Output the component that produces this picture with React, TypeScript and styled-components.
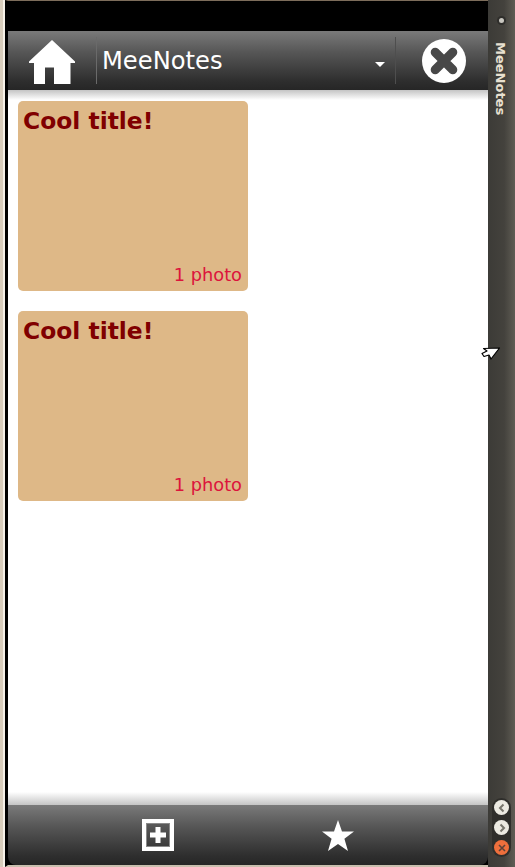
import React from "react";
import styled, { createGlobalStyle } from "styled-components";

const GlobalStyle = createGlobalStyle`
  html, body {
    margin: 0;
    padding: 0;
    background: #000;
  }
  body {
    font-family: "DejaVu Sans", sans-serif;
    overflow: hidden;
  }
`;

const notes = [
  { id: 1, title: "Cool title!", photos: "1 photo" },
  { id: 2, title: "Cool title!", photos: "1 photo" },
];

const App = () => {
  return (
    <Window>
      <GlobalStyle />
      <FrameEdge />
      <Screen>
        <StatusStrip />
        <Header>
          <HomeButton aria-label="Home">
            <svg width="46" height="44" viewBox="0 0 46 44">
              <path
                fill="#fff"
                fillRule="evenodd"
                d="M23 0 L46 21.5 V23 H41.5 V44 H5 V23 H0 V21.5 Z M16 44 H25 V27.5 H16 Z"
              />
            </svg>
          </HomeButton>
          <TitleSelect>
            <AppTitle>MeeNotes</AppTitle>
            <Caret />
          </TitleSelect>
          <CloseButton aria-label="Close">
            <svg width="44" height="44" viewBox="0 0 44 44">
              <circle cx="22" cy="22" r="22" fill="#fff" />
              <path
                d="M13.2 13.2 L30.8 30.8 M30.8 13.2 L13.2 30.8"
                stroke="#484848"
                strokeWidth="9"
                strokeLinecap="round"
              />
            </svg>
          </CloseButton>
        </Header>
        <Content>
          {notes.map((note) => (
            <NoteCard key={note.id}>
              <NoteTitle>{note.title}</NoteTitle>
              <PhotoCount>{note.photos}</PhotoCount>
            </NoteCard>
          ))}
        </Content>
        <Footer>
          <FooterSlot>
            <AddIcon>
              <svg width="16" height="16" viewBox="0 0 16 16">
                <path fill="#fff" d="M5.5 0 H10.5 V5.5 H16 V10.5 H10.5 V16 H5.5 V10.5 H0 V5.5 H5.5 Z" />
              </svg>
            </AddIcon>
          </FooterSlot>
          <FooterSlot>
            <svg width="32" height="31" viewBox="0 0 32 31">
              <path
                fill="#fff"
                d="M16 0 L20 11.5 L32 11.5 L22.4 18.8 L26 31 L16 24 L6 31 L9.6 18.8 L0 11.5 L12 11.5 Z"
              />
            </svg>
          </FooterSlot>
        </Footer>
      </Screen>
      <Sidebar>
        <SideTop>
          <Grip />
          <SideLabel>MeeNotes</SideLabel>
        </SideTop>
        <SideButtons>
          <RoundButton>
            <svg width="10" height="10" viewBox="0 0 10 10">
              <path d="M6.5 1.5 L3 5 L6.5 8.5" fill="none" stroke="#77756c" strokeWidth="2" />
            </svg>
          </RoundButton>
          <RoundButton>
            <svg width="10" height="10" viewBox="0 0 10 10">
              <path d="M3.5 1.5 L7 5 L3.5 8.5" fill="none" stroke="#77756c" strokeWidth="2" />
            </svg>
          </RoundButton>
          <RoundButton $danger>
            <svg width="10" height="10" viewBox="0 0 10 10">
              <path d="M2 2 L8 8 M8 2 L2 8" fill="none" stroke="#5c4238" strokeWidth="1.6" />
            </svg>
          </RoundButton>
        </SideButtons>
      </Sidebar>
      <Cursor>
        <svg width="20" height="14" viewBox="0 0 20 14">
          <path
            d="M18.5 1 L2.5 1.5 L6 4 L1 6.5 L3 9.5 L8 8 L10 12 Z"
            fill="#fff"
            stroke="#000"
            strokeWidth="1.2"
            strokeLinejoin="round"
          />
        </svg>
      </Cursor>
    </Window>
  );
};

export default App;

const Window = styled.div`
  position: relative;
  display: flex;
  width: 515px;
  height: 867px;
  overflow: hidden;
  background: #000;
`;

const FrameEdge = styled.div`
  width: 5px;
  flex: none;
  background: linear-gradient(to right, #d8cdbc 0, #d8cdbc 3px, #f6f1e8 3px, #f6f1e8 100%);
`;

const Screen = styled.div`
  display: flex;
  flex-direction: column;
  flex: 1;
  min-width: 0;
  border-left: 3px solid #000;
  border-top: 1px solid #7d6d5b;
  border-bottom: 2px solid #c9bfae;
  background: #000;
`;

const StatusStrip = styled.div`
  height: 30px;
  flex: none;
  background: #000;
`;

const barGradient = "linear-gradient(to bottom, #7a7a7a 0%, #575757 35%, #2e2e2e 85%, #262626 100%)";

const Header = styled.header`
  display: flex;
  align-items: center;
  height: 59px;
  flex: none;
  background: ${barGradient};
`;

const HomeButton = styled.div`
  display: flex;
  align-items: center;
  justify-content: center;
  width: 88px;
  height: 47px;
  padding-top: 2px;
  box-sizing: border-box;
`;

const TitleSelect = styled.div`
  display: flex;
  align-items: center;
  justify-content: space-between;
  width: 300px;
  height: 47px;
  padding: 0 10px 0 5px;
  box-sizing: border-box;
  border-left: 1px solid #6a6a6a;
  border-right: 1px solid #4e4e4e;
`;

const AppTitle = styled.span`
  margin-top: 2px;
  color: #fff;
  font-size: 24.2px;
  line-height: 1;
`;

const Caret = styled.span`
  width: 0;
  height: 0;
  margin-top: 8px;
  border-left: 5px solid transparent;
  border-right: 5px solid transparent;
  border-top: 5px solid #fff;
`;

const CloseButton = styled.div`
  display: flex;
  align-items: center;
  justify-content: center;
  flex: 1;
  height: 47px;
  padding-left: 4px;
  box-sizing: border-box;
`;

const Content = styled.main`
  flex: 1;
  display: flex;
  flex-direction: column;
  gap: 20px;
  padding: 11px 0 0 10px;
  background:
    linear-gradient(to bottom, #c4c4c4 0, #fff 10px) top / 100% 10px no-repeat,
    linear-gradient(to top, #c4c4c4 0, #fff 13px) bottom / 100% 13px no-repeat,
    #fff;
`;

const NoteCard = styled.article`
  display: flex;
  flex-direction: column;
  justify-content: space-between;
  width: 230px;
  height: 190px;
  padding: 5px 6px 4px 5px;
  box-sizing: border-box;
  border-radius: 5px;
  background: #deb887;
`;

const NoteTitle = styled.h2`
  margin: 0;
  color: #800000;
  font-size: 23.4px;
  font-weight: bold;
  line-height: 30px;
`;

const PhotoCount = styled.div`
  color: #dc143c;
  font-size: 17.8px;
  line-height: 24px;
  text-align: right;
`;

const Footer = styled.footer`
  display: flex;
  align-items: center;
  justify-content: center;
  height: 60px;
  flex: none;
  border-bottom-left-radius: 8px;
  border-bottom-right-radius: 8px;
  background: ${barGradient};
`;

const FooterSlot = styled.div`
  display: flex;
  align-items: center;
  justify-content: center;
  width: 180px;
`;

const AddIcon = styled.div`
  display: flex;
  align-items: center;
  justify-content: center;
  width: 32px;
  height: 32px;
  box-sizing: border-box;
  border: 4px solid #fff;
  box-shadow: inset 0 0 0 1px #8a8a8a;
`;

const Sidebar = styled.aside`
  display: flex;
  flex-direction: column;
  justify-content: space-between;
  align-items: center;
  width: 27px;
  flex: none;
  padding: 18px 0 10px;
  box-sizing: border-box;
  background: linear-gradient(to right, #3c3b37 0%, #44423d 60%, #5f5c54 100%);
`;

const SideTop = styled.div`
  display: flex;
  flex-direction: column;
  align-items: center;
`;

const Grip = styled.span`
  width: 5px;
  height: 5px;
  border-radius: 50%;
  background: #c9c7c0;
  box-shadow: 0 0 0 2px #2f2e2b;
`;

const SideLabel = styled.span`
  margin: 19px 2px 0 0;
  writing-mode: vertical-rl;
  color: #e8e0d0;
  font-size: 13px;
  font-weight: bold;
  line-height: 1;
`;

const SideButtons = styled.div`
  display: flex;
  flex-direction: column;
  gap: 5px;
  padding: 2px 2px;
  border-radius: 10px;
  background: #2f2e2b;
`;

const RoundButton = styled.span<{ $danger?: boolean }>`
  display: flex;
  align-items: center;
  justify-content: center;
  width: 15px;
  height: 15px;
  border-radius: 50%;
  background: ${(p) => (p.$danger ? "#ee6f3c" : "#eceae2")};
`;

const Cursor = styled.div`
  position: absolute;
  left: 481px;
  top: 347px;
  display: flex;
`;
